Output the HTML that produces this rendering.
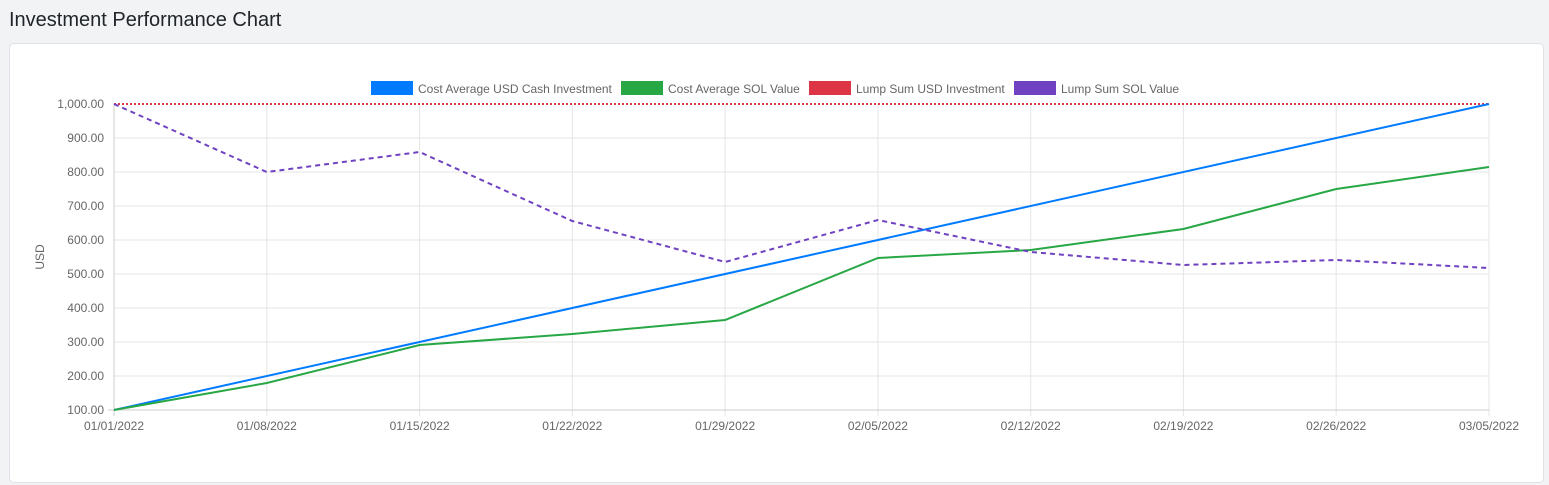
<!DOCTYPE html>
<html><head><style>
body{margin:0;background:#f1f3f5;font-family:"Liberation Sans",sans-serif;width:1549px;height:485px;overflow:hidden;position:relative}
h1{position:absolute;left:9px;top:9px;margin:0;font-size:20px;font-weight:500;color:#212529}
.card{position:absolute;left:9px;top:43px;width:1535px;height:440px;background:#fff;border:1px solid #dee2e6;border-radius:5px;box-sizing:border-box}
svg{position:absolute;left:0;top:0}
</style></head><body>
<h1>Investment Performance Chart</h1>
<div class="card"></div>
<svg width="1549" height="485" font-family="Liberation Sans, sans-serif" font-size="12" fill="#666">
<g stroke="#e5e5e5" stroke-width="1">
<line x1="114" y1="138" x2="1489" y2="138"/><line x1="114" y1="172" x2="1489" y2="172"/><line x1="114" y1="206" x2="1489" y2="206"/><line x1="114" y1="240" x2="1489" y2="240"/><line x1="114" y1="274" x2="1489" y2="274"/><line x1="114" y1="308" x2="1489" y2="308"/><line x1="114" y1="342" x2="1489" y2="342"/><line x1="114" y1="376" x2="1489" y2="376"/>
<line x1="266.8" y1="104" x2="266.8" y2="416"/><line x1="419.6" y1="104" x2="419.6" y2="416"/><line x1="572.3" y1="104" x2="572.3" y2="416"/><line x1="725.1" y1="104" x2="725.1" y2="416"/><line x1="877.9" y1="104" x2="877.9" y2="416"/><line x1="1030.7" y1="104" x2="1030.7" y2="416"/><line x1="1183.4" y1="104" x2="1183.4" y2="416"/><line x1="1336.2" y1="104" x2="1336.2" y2="416"/><line x1="1489" y1="104" x2="1489" y2="416"/>
</g>
<line x1="108" y1="410" x2="1489" y2="410" stroke="#ccc"/><line x1="114" y1="104" x2="114" y2="416" stroke="#ccc"/>
<g text-anchor="end">
<text x="104" y="108">1,000.00</text><text x="104" y="142">900.00</text><text x="104" y="176">800.00</text><text x="104" y="210">700.00</text><text x="104" y="244">600.00</text><text x="104" y="278">500.00</text><text x="104" y="312">400.00</text><text x="104" y="346">300.00</text><text x="104" y="380">200.00</text><text x="104" y="414">100.00</text>
</g>
<text transform="translate(44,257) rotate(-90)" text-anchor="middle">USD</text>
<g text-anchor="middle">
<text x="114" y="430">01/01/2022</text><text x="266.8" y="430">01/08/2022</text><text x="419.6" y="430">01/15/2022</text><text x="572.3" y="430">01/22/2022</text><text x="725.1" y="430">01/29/2022</text><text x="877.9" y="430">02/05/2022</text><text x="1030.7" y="430">02/12/2022</text><text x="1183.4" y="430">02/19/2022</text><text x="1336.2" y="430">02/26/2022</text><text x="1489" y="430">03/05/2022</text>
</g>
<line x1="114" y1="104" x2="1489" y2="104" stroke="#dc3545" stroke-width="2" stroke-dasharray="2,2"/>
<polyline fill="none" stroke="#007bff" stroke-width="2" points="114,410 1489,104"/>
<polyline fill="none" stroke="#28a745" stroke-width="2" points="114,410 266.8,383 419.6,345 572.3,334 725.1,320 877.9,258 1030.7,250 1183.4,229 1336.2,189 1489,167"/>
<polyline fill="none" stroke="#6f42c1" stroke-width="2" stroke-dasharray="5,4" points="114,104 266.8,172 419.6,152 572.3,221 725.1,262 877.9,220 1030.7,252 1183.4,265 1336.2,260 1489,268"/>
<rect x="371" y="81" width="42" height="14" fill="#007bff"/><text x="418" y="93">Cost Average USD Cash Investment</text>
<rect x="621" y="81" width="42" height="14" fill="#28a745"/><text x="668" y="93">Cost Average SOL Value</text>
<rect x="809" y="81" width="42" height="14" fill="#dc3545"/><text x="856" y="93">Lump Sum USD Investment</text>
<rect x="1014" y="81" width="42" height="14" fill="#6f42c1"/><text x="1061" y="93">Lump Sum SOL Value</text>
</svg>
</body></html>
